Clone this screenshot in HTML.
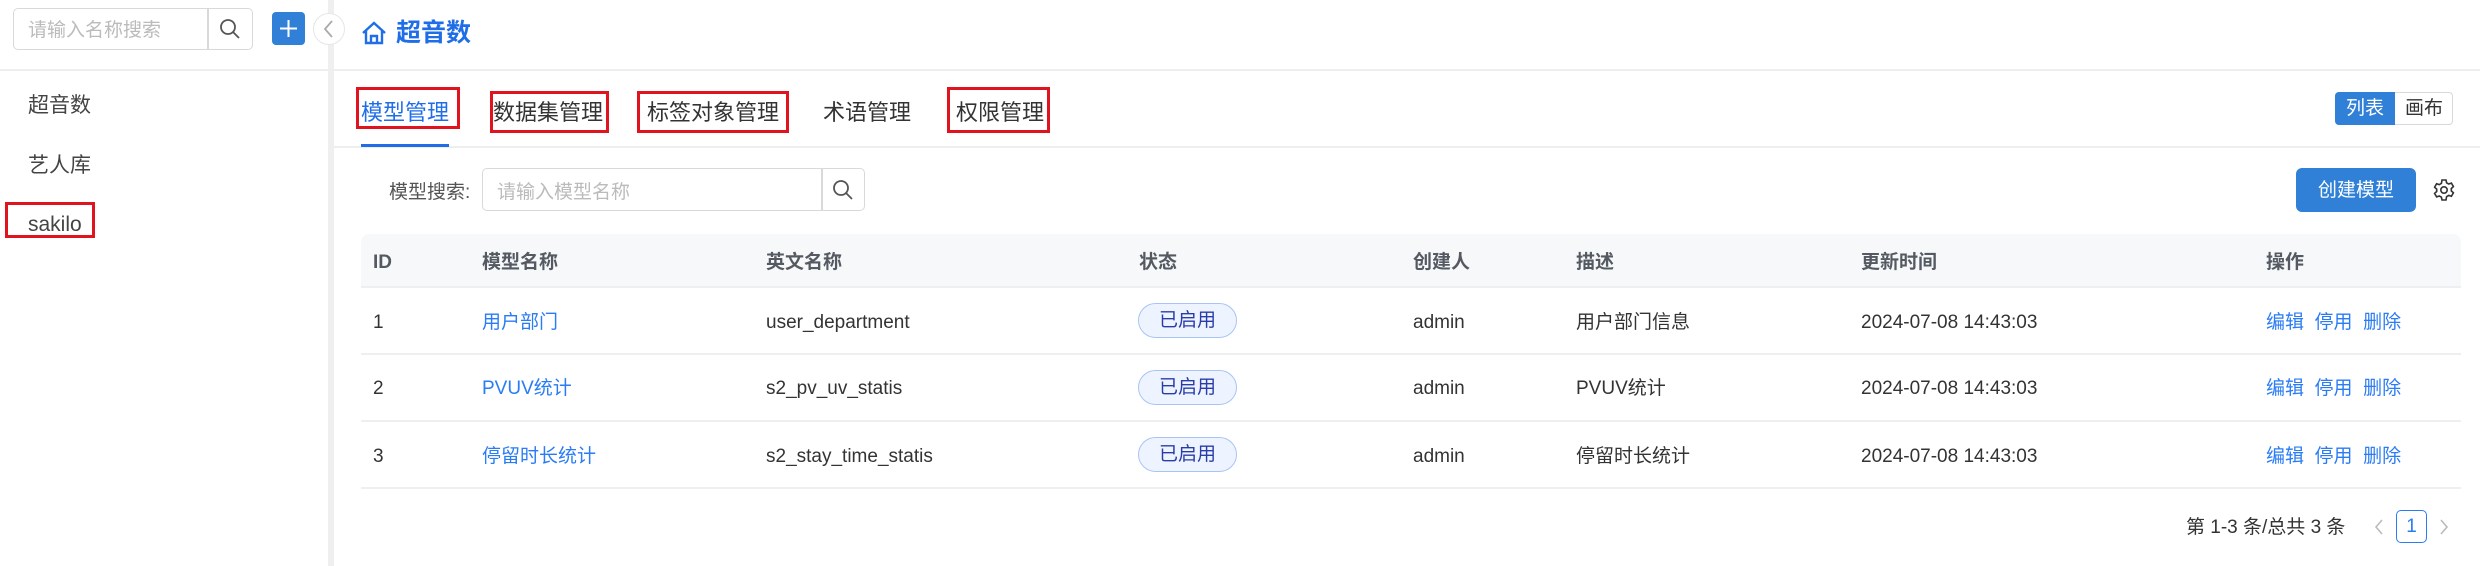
<!DOCTYPE html>
<html><head><meta charset="utf-8"><style>
*{box-sizing:border-box;margin:0;padding:0}
body{width:2480px;height:566px;background:#fff;font-family:"Liberation Sans","Noto Sans CJK SC",sans-serif;position:relative;overflow:hidden;color:#333;line-height:1.2}
.a{position:absolute;white-space:nowrap}
.rb{position:absolute;border:3px solid #e0141e}
.th{position:absolute;top:251px;font-size:19px;font-weight:bold;color:#555a62;line-height:23px}
.td{position:absolute;font-size:19px;color:#333;line-height:23px}
.lk{color:#2a7cf5}
.tag{position:absolute;left:1138px;width:99px;height:35px;border:1.5px solid #a8c4f5;background:#eef4ff;border-radius:18px;color:#2a3ca8;font-size:19px;display:flex;align-items:center;justify-content:center;line-height:1}
.ln{position:absolute;left:361px;width:2100px;height:2px;background:#eeeff1}
.ctr{display:flex;align-items:center;justify-content:center;line-height:1}
</style></head><body>
<!-- sidebar -->
<div class="a" style="left:328px;top:0;width:6px;height:566px;background:#efefef"></div>
<div class="a" style="left:13px;top:8px;width:240px;height:42px;border:1.5px solid #d9d9d9;border-radius:5px"></div>
<div class="a" style="left:207px;top:8px;width:1.5px;height:42px;background:#d9d9d9"></div>
<div class="a" style="left:28px;top:20px;font-size:19px;color:#bbb">请输入名称搜索</div>
<svg class="a" style="left:218px;top:17px" width="24" height="24" viewBox="0 0 24 24"><circle cx="10" cy="10" r="7" fill="none" stroke="#555" stroke-width="1.8"/><path d="M15 15l6 6" stroke="#555" stroke-width="1.8"/></svg>
<div class="a" style="left:272px;top:12px;width:33px;height:33px;background:#2f80d6;border-radius:4px"></div>
<svg class="a" style="left:272px;top:12px" width="33" height="33"><path d="M16.5 8v17M8 16.5h17" stroke="#fff" stroke-width="2"/></svg>
<div class="a" style="left:313px;top:13px;width:32px;height:32px;border-radius:50%;background:#fff;border:1px solid #e6e6e6"></div>
<svg class="a" style="left:313px;top:13px" width="32" height="32"><path d="M19 8l-7 8 7 8" fill="none" stroke="#aaa" stroke-width="1.8"/></svg>
<div class="a" style="left:0;top:69px;width:2480px;height:2px;background:#eeeeee"></div>
<div class="a" style="left:28px;top:93px;font-size:21px;color:#444">超音数</div>
<div class="a" style="left:28px;top:153px;font-size:21px;color:#444">艺人库</div>
<div class="a" style="left:28px;top:212px;font-size:21px;color:#444">sakilo</div>
<div class="rb" style="left:5px;top:202px;width:90px;height:36px"></div>
<!-- header -->
<svg class="a" style="left:361px;top:21px" width="26" height="24" viewBox="0 0 26 24"><path d="M2 12L13 2l11 10M5 9.5V22h16V9.5M10 22v-7h6v7" fill="none" stroke="#1f6ee8" stroke-width="2.4"/></svg>
<div class="a" style="left:396px;top:18px;font-size:25px;font-weight:bold;color:#1f6ee8">超音数</div>
<!-- tabs -->
<div class="a" style="left:361px;top:100px;font-size:22px;color:#1f6ee8">模型管理</div>
<div class="a" style="left:493px;top:100px;font-size:22px;color:#333">数据集管理</div>
<div class="a" style="left:647px;top:100px;font-size:22px;color:#333">标签对象管理</div>
<div class="a" style="left:823px;top:100px;font-size:22px;color:#333">术语管理</div>
<div class="a" style="left:956px;top:100px;font-size:22px;color:#333">权限管理</div>
<div class="rb" style="left:356px;top:87px;width:104px;height:42px"></div>
<div class="rb" style="left:490px;top:91px;width:119px;height:42px"></div>
<div class="rb" style="left:637px;top:91px;width:152px;height:42px"></div>
<div class="rb" style="left:947px;top:87px;width:103px;height:46px"></div>
<div class="a" style="left:334px;top:146px;width:2146px;height:2px;background:#eeeeee"></div>
<div class="a" style="left:361px;top:144px;width:88px;height:3px;background:#1f6ee8"></div>
<div class="a" style="left:2335px;top:92px;width:118px;height:33px;border:1px solid #d9d9d9;border-radius:4px"></div>
<div class="a ctr" style="left:2335px;top:92px;width:60px;height:33px;background:#2f80d6;border-radius:4px 0 0 4px;color:#fff;font-size:19px">列表</div>
<div class="a ctr" style="left:2395px;top:92px;width:58px;height:33px;color:#333;font-size:19px">画布</div>
<!-- search -->
<div class="a" style="left:389px;top:182px;font-size:19px;color:#555">模型搜索:</div>
<div class="a" style="left:482px;top:168px;width:383px;height:43px;border:1.5px solid #d9d9d9;border-radius:5px"></div>
<div class="a" style="left:821px;top:168px;width:1.5px;height:43px;background:#d9d9d9"></div>
<div class="a" style="left:497px;top:182px;font-size:19px;color:#bbb">请输入模型名称</div>
<svg class="a" style="left:831px;top:178px" width="24" height="24" viewBox="0 0 24 24"><circle cx="10" cy="10" r="7" fill="none" stroke="#555" stroke-width="1.8"/><path d="M15 15l6 6" stroke="#555" stroke-width="1.8"/></svg>
<div class="a ctr" style="left:2296px;top:168px;width:120px;height:44px;background:#2f80d6;border-radius:6px;color:#fff;font-size:19px">创建模型</div>
<svg class="a" style="left:2432px;top:178px" width="24" height="24" viewBox="0 0 24 24"><path d="M10 2h4l.6 2.8 2.1 1.2 2.7-.9 2 3.5-2.1 1.9v2.4l2.1 1.9-2 3.5-2.7-.9-2.1 1.2L14 22h-4l-.6-2.8-2.1-1.2-2.7.9-2-3.5 2.1-1.9v-2.4L2.6 9.2l2-3.5 2.7.9 2.1-1.2z" fill="none" stroke="#333" stroke-width="1.6"/><circle cx="12" cy="12" r="3.2" fill="none" stroke="#333" stroke-width="1.6"/></svg>
<!-- table -->
<div class="a" style="left:361px;top:234px;width:2100px;height:53px;background:#f7f8fa;border-radius:8px 8px 0 0"></div>
<div class="ln" style="top:286px"></div>
<div class="th" style="left:373px">ID</div>
<div class="th" style="left:482px">模型名称</div>
<div class="th" style="left:766px">英文名称</div>
<div class="th" style="left:1139px">状态</div>
<div class="th" style="left:1413px">创建人</div>
<div class="th" style="left:1576px">描述</div>
<div class="th" style="left:1861px">更新时间</div>
<div class="th" style="left:2266px">操作</div>

<div class="td" style="left:373px;top:311px">1</div>
<div class="td lk" style="left:482px;top:311px">用户部门</div>
<div class="td" style="left:766px;top:311px">user_department</div>
<div class="tag" style="top:303px">已启用</div>
<div class="td" style="left:1413px;top:311px">admin</div>
<div class="td" style="left:1576px;top:311px">用户部门信息</div>
<div class="td" style="left:1861px;top:311px">2024-07-08 14:43:03</div>
<div class="td lk" style="left:2266px;top:311px">编辑&nbsp; 停用&nbsp; 删除</div>
<div class="ln" style="top:353px"></div>

<div class="td" style="left:373px;top:377px">2</div>
<div class="td lk" style="left:482px;top:377px">PVUV统计</div>
<div class="td" style="left:766px;top:377px">s2_pv_uv_statis</div>
<div class="tag" style="top:370px">已启用</div>
<div class="td" style="left:1413px;top:377px">admin</div>
<div class="td" style="left:1576px;top:377px">PVUV统计</div>
<div class="td" style="left:1861px;top:377px">2024-07-08 14:43:03</div>
<div class="td lk" style="left:2266px;top:377px">编辑&nbsp; 停用&nbsp; 删除</div>
<div class="ln" style="top:420px"></div>

<div class="td" style="left:373px;top:445px">3</div>
<div class="td lk" style="left:482px;top:445px">停留时长统计</div>
<div class="td" style="left:766px;top:445px">s2_stay_time_statis</div>
<div class="tag" style="top:437px">已启用</div>
<div class="td" style="left:1413px;top:445px">admin</div>
<div class="td" style="left:1576px;top:445px">停留时长统计</div>
<div class="td" style="left:1861px;top:445px">2024-07-08 14:43:03</div>
<div class="td lk" style="left:2266px;top:445px">编辑&nbsp; 停用&nbsp; 删除</div>
<div class="ln" style="top:487px"></div>
<!-- pagination -->
<div class="td" style="left:2186px;top:516px">第 1-3 条/总共 3 条</div>
<svg class="a" style="left:2372px;top:516px" width="14" height="22"><path d="M10 4l-6 7 6 7" fill="none" stroke="#bbb" stroke-width="1.6"/></svg>
<div class="a ctr" style="left:2396px;top:510px;width:31px;height:33px;border:1.5px solid #2a7cf5;border-radius:5px;color:#2a7cf5;font-size:19px">1</div>
<svg class="a" style="left:2437px;top:516px" width="14" height="22"><path d="M4 4l6 7-6 7" fill="none" stroke="#bbb" stroke-width="1.6"/></svg>
</body></html>
